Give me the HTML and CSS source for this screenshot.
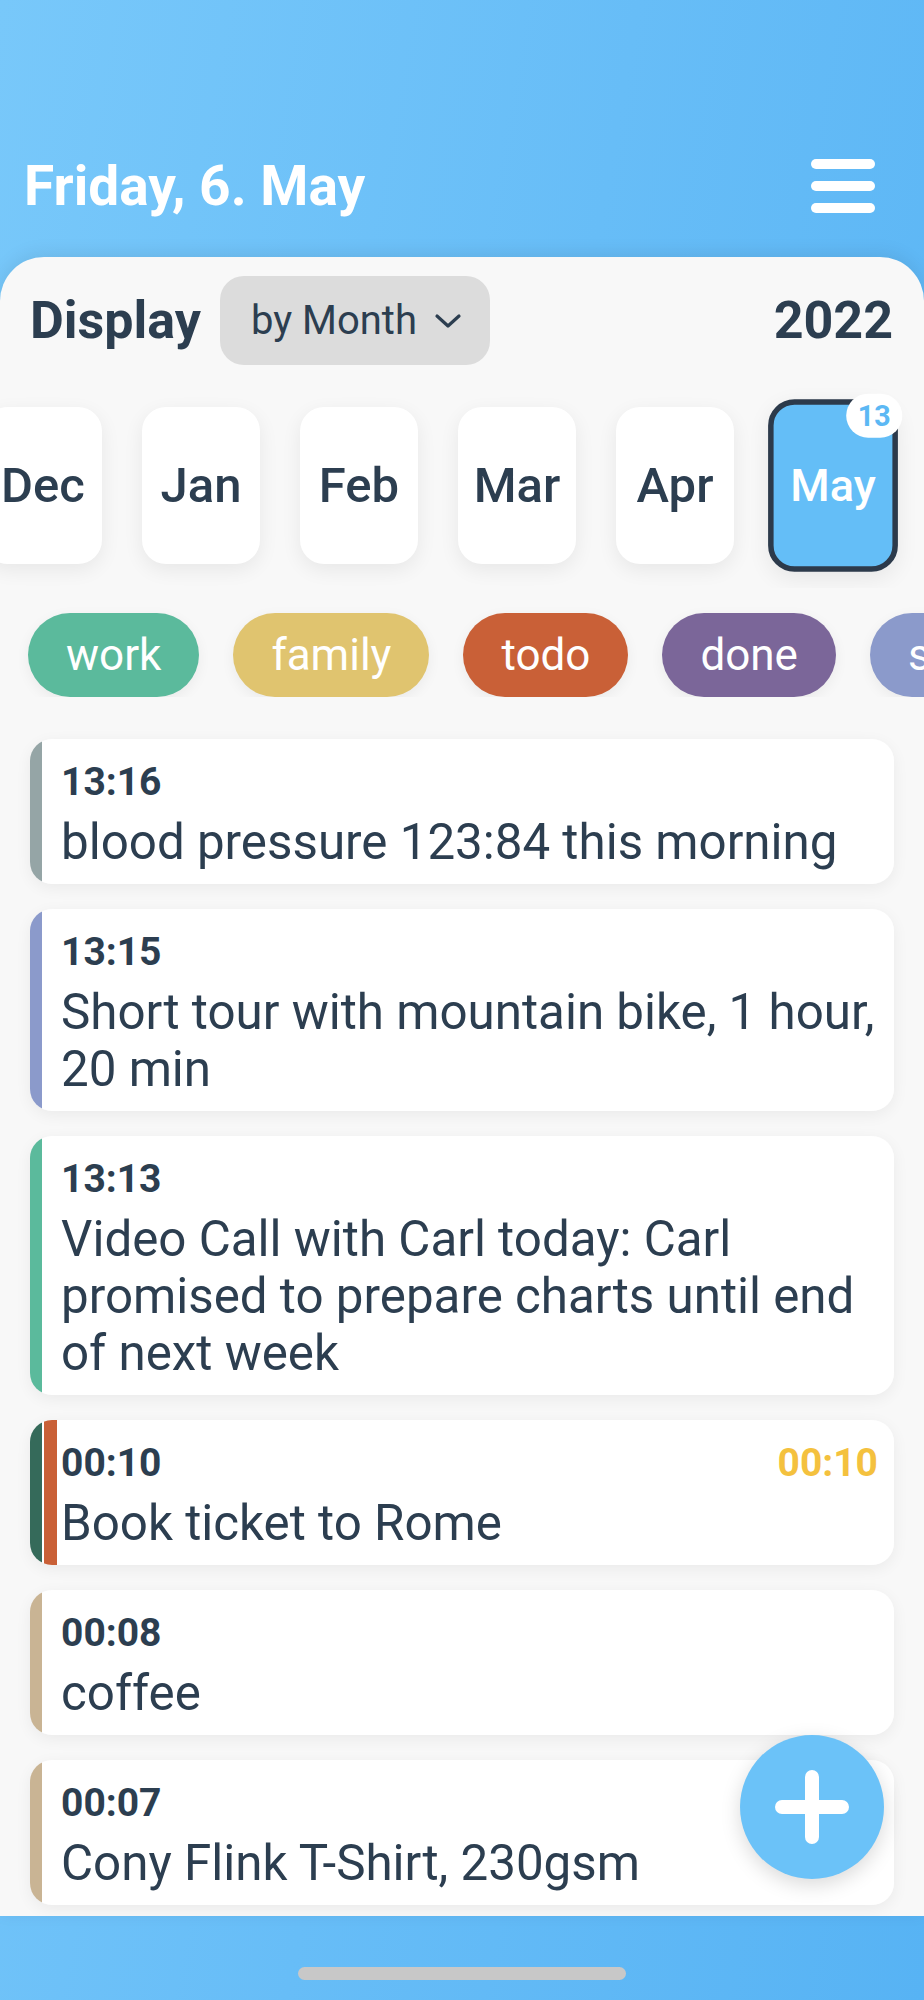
FILE: index.html
```html
<!DOCTYPE html>
<html lang="en">
<head>
<meta charset="UTF-8" />
<meta name="viewport" content="width=device-width, initial-scale=1" />
<title>Journal</title>
<link rel="stylesheet" href="styles.css">
</head>
<body>

<div class="app">
  <header class="topbar">
    <h1 class="today">Friday, 6. May</h1>
    <button class="menuBtn" aria-label="Menu">
      <span></span><span></span><span></span>
    </button>
  </header>

  <main class="panel">
    <div class="displayRow">
      <span class="displayLabel">Display</span>
      <button class="modeSelect">
        by Month
        <svg width="28" height="16" viewBox="0 0 28 16"><path d="M3 3 L14 13 L25 3" fill="none" stroke="#2c3e50" stroke-width="3.2" stroke-linecap="round" stroke-linejoin="round"/></svg>
      </button>
      <span class="year">2022</span>
    </div>

    <div class="months">
      <div class="month">Dec</div>
      <div class="month">Jan</div>
      <div class="month">Feb</div>
      <div class="month">Mar</div>
      <div class="month">Apr</div>
      <div class="month active">May<span class="count">13</span></div>
    </div>

    <div class="tags">
      <span class="tag work">work</span>
      <span class="tag family">family</span>
      <span class="tag todo">todo</span>
      <span class="tag done">done</span>
      <span class="tag sport">sport</span>
    </div>

    <div class="entries">
      <div class="entry bar-grey">
        <div class="entryHead"><span class="time">13:16</span></div>
        <p class="entryText">blood pressure 123:84 this morning</p>
      </div>
      <div class="entry bar-blue">
        <div class="entryHead"><span class="time">13:15</span></div>
        <p class="entryText">Short tour with mountain bike, 1 hour, 20 min</p>
      </div>
      <div class="entry bar-green">
        <div class="entryHead"><span class="time">13:13</span></div>
        <p class="entryText">Video Call with Carl today: Carl promised to prepare charts until end of next week</p>
      </div>
      <div class="entry bar-work-todo">
        <div class="entryHead"><span class="time">00:10</span><span class="due">00:10</span></div>
        <p class="entryText">Book ticket to Rome</p>
      </div>
      <div class="entry bar-tan">
        <div class="entryHead"><span class="time">00:08</span></div>
        <p class="entryText">coffee</p>
      </div>
      <div class="entry bar-tan">
        <div class="entryHead"><span class="time">00:07</span></div>
        <p class="entryText">Cony Flink T-Shirt, 230gsm</p>
      </div>
    </div>
  </main>

  <footer class="bottombar">
    <div class="homeIndicator"></div>
  </footer>

  <button class="addBtn" aria-label="Add entry">
    <svg width="74" height="74" viewBox="0 0 74 74"><path d="M37 7 V67 M7 37 H67" stroke="#fff" stroke-width="14" stroke-linecap="round"/></svg>
  </button>
</div>

</body>
</html>
```

FILE: styles.css
```css
body {
  margin: 0;
  font-family: Roboto, "Noto Sans", Arial, sans-serif;
  color: #2c3e50;
}
.app {
  position: relative;
  width: 924px;
  height: 2000px;
  display: flex;
  flex-direction: column;
  overflow: hidden;
  background: linear-gradient(100deg, #78c8fa 0%, #67bdf7 50%, #57b3f4 100%);
}

/* header */
.topbar {
  height: 257px;
  box-sizing: border-box;
  display: flex;
  align-items: flex-end;
  justify-content: space-between;
  padding: 0 49px 38px 24px;
  flex-shrink: 0;
}
.today {
  margin: 0;
  font-size: 55px;
  line-height: 65px;
  font-weight: 700;
  color: #fff;
}
.menuBtn {
  display: flex;
  flex-direction: column;
  gap: 12px;
  width: 64px;
  padding: 0;
  margin-bottom: 6px;
  background: none;
  border: none;
}
.menuBtn span {
  display: block;
  height: 10px;
  border-radius: 5px;
  background: #fff;
}

/* white panel */
.panel {
  flex: 1;
  background: #f8f8f8;
  border-radius: 44px 44px 0 0;
  box-shadow: 0 -4px 18px rgba(0,0,0,0.08);
  overflow: hidden;
}
.displayRow {
  display: flex;
  align-items: center;
  padding: 19px 31px 0 30px;
}
.displayLabel {
  font-size: 52px;
  font-weight: 700;
}
.modeSelect {
  display: flex;
  align-items: center;
  gap: 17px;
  height: 89px;
  margin-left: 19px;
  padding: 0 28px 0 31px;
  background: #dcdcdc;
  border: none;
  border-radius: 24px;
  font-family: inherit;
  font-size: 40px;
  color: #2c3e50;
}
.year {
  margin-left: auto;
  font-size: 52px;
  font-weight: 700;
}

/* months */
.months {
  display: flex;
  justify-content: flex-end;
  gap: 40px;
  padding: 22px 32px 24px 0;
  margin-top: 20px;
  overflow: hidden;
}
.month {
  position: relative;
  flex-shrink: 0;
  width: 118px;
  height: 157px;
  box-sizing: border-box;
  display: flex;
  align-items: center;
  justify-content: center;
  background: #fff;
  border-radius: 24px;
  box-shadow: 0 6px 20px rgba(0,0,0,0.07);
  font-size: 49px;
  font-weight: 500;
}
.month.active {
  background: #64bef7;
  border: 5px solid #2c3a4b;
  color: #fff;
  font-size: 41px;
  transform: scale(1.1);
}
.count {
  position: absolute;
  top: -10px;
  right: -9px;
  width: 51px;
  height: 40px;
  border-radius: 20px;
  background: #fff;
  color: #5cb8f4;
  font-size: 26px;
  font-weight: 700;
  display: flex;
  align-items: center;
  justify-content: center;
}

/* tags */
.tags {
  display: flex;
  gap: 34px;
  padding: 25px 0 0 28px;
  overflow: hidden;
}
.tag {
  flex-shrink: 0;
  height: 84px;
  line-height: 84px;
  padding: 0 38px;
  border-radius: 42px;
  color: #fff;
  font-size: 44px;
  box-shadow: 0 4px 14px rgba(0,0,0,0.06);
}
.work { background: #5bba9c; }
.family { background: #e0c46f; }
.todo { background: #c96037; }
.done { background: #7b6699; }
.sport { background: #8b9acb; }

/* entries */
.entries {
  display: flex;
  flex-direction: column;
  gap: 25px;
  padding: 42px 30px 0 30px;
}
.entry {
  border-radius: 22px;
  padding: 20px 16px 13px 31px;
  box-shadow: 0 4px 16px rgba(0,0,0,0.06);
}
.bar-grey { background: linear-gradient(to right, #95a5a6 12px, #fff 12px); }
.bar-blue { background: linear-gradient(to right, #8b9acb 12px, #fff 12px); }
.bar-green { background: linear-gradient(to right, #5bba9c 12px, #fff 12px); }
.bar-tan { background: linear-gradient(to right, #c9b494 12px, #fff 12px); }
.bar-work-todo {
  background: linear-gradient(to right, #356a5a 12px, #fff 12px 14px, #c96037 14px 27px, #fff 27px);
}
.entryHead {
  display: flex;
  justify-content: space-between;
  font-size: 39px;
  line-height: 47px;
  font-weight: 700;
}
.due {
  color: #f4c13e;
}
.entryText {
  margin: 8px 0 0;
  font-size: 49.3px;
  line-height: 57px;
}

/* bottom */
.bottombar {
  height: 84px;
  flex-shrink: 0;
  display: flex;
  justify-content: center;
  align-items: flex-end;
}
.homeIndicator {
  width: 328px;
  height: 13px;
  margin-bottom: 20px;
  border-radius: 7px;
  background: #c8c8c8;
}
.addBtn {
  position: absolute;
  right: 40px;
  bottom: 121px;
  width: 144px;
  height: 144px;
  border-radius: 50%;
  border: none;
  padding: 0;
  background: #6bc2f8;
  box-shadow: 0 6px 20px rgba(0,0,0,0.15);
  display: flex;
  align-items: center;
  justify-content: center;
}
```
